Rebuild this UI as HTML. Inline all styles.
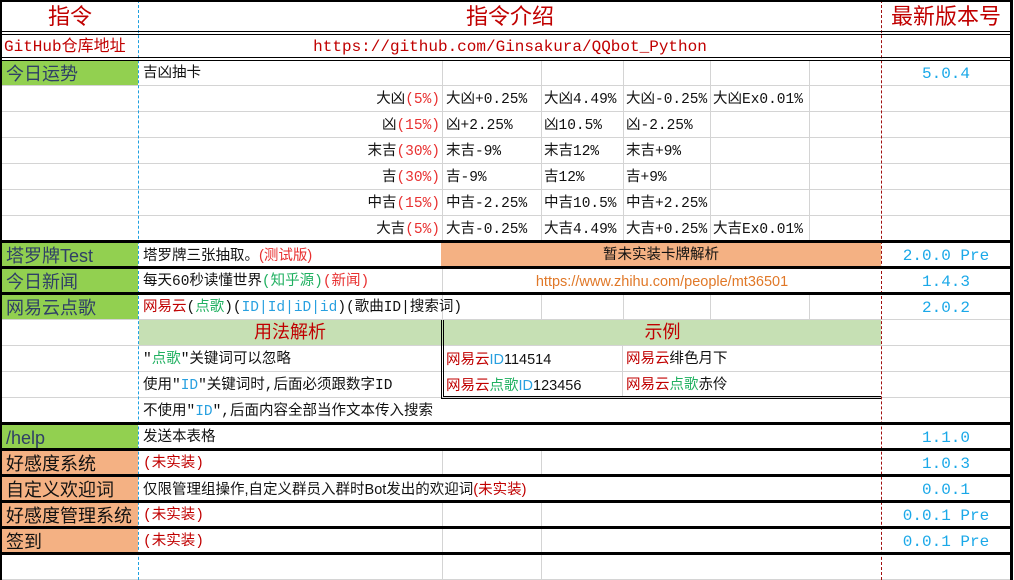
<!DOCTYPE html>
<html><head><meta charset="utf-8"><style>
*{margin:0;padding:0;box-sizing:border-box}
body{width:1014px;height:580px;background:#fff;position:relative;overflow:hidden;font-family:"Liberation Mono","Noto Sans CJK SC",monospace;font-size:14.5px;color:#111}
div{position:absolute}
.h{height:1px;background:#d4d4d4}
.v{width:1px;background:#d4d4d4}
.k{height:3px;background:#000}
.t{white-space:nowrap;line-height:28px;height:26px}
.a{left:6px;font-size:18px;font-family:"Liberation Sans","Noto Sans CJK SC",sans-serif;color:#2f3f66}
.ao{left:6px;font-size:18px;font-family:"Liberation Sans","Noto Sans CJK SC",sans-serif;color:#111}
.ver{left:882px;width:128px;text-align:center;color:#1aa8e8;font-size:16px}
.r{color:#e83030}.g{color:#20b060}.b{color:#28a0e0}.dr{color:#c00000}
.R{right:574px;text-align:right}
</style></head><body>
<!-- fills -->
<div style="left:2px;top:60px;width:136px;height:25px;background:#92d050"></div>
<div style="left:2px;top:242px;width:136px;height:25px;background:#92d050"></div>
<div style="left:2px;top:268px;width:136px;height:25px;background:#92d050"></div>
<div style="left:2px;top:294px;width:136px;height:25px;background:#92d050"></div>
<div style="left:2px;top:424px;width:136px;height:25px;background:#92d050"></div>
<div style="left:2px;top:451px;width:136px;height:25px;background:#f4b183"></div>
<div style="left:2px;top:477px;width:136px;height:25px;background:#f4b183"></div>
<div style="left:2px;top:503px;width:136px;height:25px;background:#f4b183"></div>
<div style="left:2px;top:529px;width:136px;height:25px;background:#f4b183"></div>
<div style="left:441px;top:242px;width:440px;height:25px;background:#f4b183"></div>
<div style="left:139px;top:320px;width:742px;height:25px;background:#c6e0b4"></div>

<div class="h" style="left:2px;top:85px;width:1008px"></div>
<div class="h" style="left:2px;top:111px;width:1008px"></div>
<div class="h" style="left:2px;top:137px;width:1008px"></div>
<div class="h" style="left:2px;top:163px;width:1008px"></div>
<div class="h" style="left:2px;top:189px;width:1008px"></div>
<div class="h" style="left:2px;top:215px;width:1008px"></div>
<div class="h" style="left:2px;top:319px;width:1008px"></div>
<div class="h" style="left:2px;top:345px;width:1008px"></div>
<div class="h" style="left:2px;top:371px;width:1008px"></div>
<div class="h" style="left:2px;top:397px;width:1008px"></div>
<div class="h" style="left:2px;top:579px;width:1008px"></div>

<div class="v" style="left:442px;top:60px;height:181px"></div>
<div class="v" style="left:541px;top:60px;height:181px"></div>
<div class="v" style="left:623px;top:60px;height:181px"></div>
<div class="v" style="left:710px;top:60px;height:181px"></div>
<div class="v" style="left:809px;top:60px;height:181px"></div>
<div class="v" style="left:442px;top:268px;height:25px"></div>
<div class="v" style="left:442px;top:294px;height:25px"></div>
<div class="v" style="left:541px;top:294px;height:25px"></div>
<div class="v" style="left:623px;top:294px;height:25px"></div>
<div class="v" style="left:710px;top:294px;height:25px"></div>
<div class="v" style="left:809px;top:294px;height:25px"></div>
<div class="v" style="left:622px;top:346px;height:51px"></div>
<div class="v" style="left:442px;top:451px;height:24px"></div>
<div class="v" style="left:541px;top:451px;height:24px"></div>
<div class="v" style="left:442px;top:503px;height:24px"></div>
<div class="v" style="left:541px;top:503px;height:24px"></div>
<div class="v" style="left:442px;top:529px;height:24px"></div>
<div class="v" style="left:541px;top:529px;height:24px"></div>
<div class="v" style="left:442px;top:555px;height:25px"></div>
<div class="v" style="left:541px;top:555px;height:25px"></div>

<div style="left:441px;top:320px;width:440px;height:79px;border-left:3px double #000;border-bottom:3px double #000"></div>

<div style="left:138px;top:0;height:580px;border-left:1px dashed #1ea0e0"></div>
<div style="left:881px;top:0;height:580px;border-left:1px dashed #a01010"></div>

<div style="left:0;top:0;width:2px;height:580px;background:#000"></div>
<div style="left:1010px;top:0;width:3px;height:580px;background:#000"></div>
<div style="left:0;top:0;width:1013px;height:2px;background:#000"></div>
<div style="left:0;top:31px;width:1013px;height:4px;border-top:1px solid #000;border-bottom:1px solid #000"></div>
<div style="left:0;top:57px;width:1013px;height:4px;border-top:1px solid #000;border-bottom:1px solid #000"></div>
<div class="k" style="left:0;top:240px;width:1013px"></div>
<div class="k" style="left:0;top:266px;width:1013px"></div>
<div class="k" style="left:0;top:292px;width:1013px"></div>
<div class="k" style="left:0;top:422px;width:1013px"></div>
<div class="k" style="left:0;top:448px;width:1013px"></div>
<div class="k" style="left:0;top:474px;width:1013px"></div>
<div class="k" style="left:0;top:500px;width:1013px"></div>
<div class="k" style="left:0;top:526px;width:1013px"></div>
<div class="k" style="left:0;top:552px;width:1013px"></div>

<div class="t dr" style="left:2px;top:2px;width:136px;text-align:center;font-size:22px;line-height:30px;height:30px;font-family:'Liberation Sans','Noto Sans CJK SC',sans-serif">指令</div>
<div class="t dr" style="left:139px;top:2px;width:742px;text-align:center;font-size:22px;line-height:30px;height:30px;font-family:'Liberation Sans','Noto Sans CJK SC',sans-serif">指令介绍</div>
<div class="t dr" style="left:882px;top:2px;width:128px;text-align:center;font-size:22px;line-height:30px;height:30px;font-family:'Liberation Sans','Noto Sans CJK SC',sans-serif">最新版本号</div>
<div class="t dr" style="left:4px;top:34px;font-size:16px;line-height:26px">GitHub仓库地址</div>
<div class="t dr" style="left:139px;top:34px;width:742px;text-align:center;font-size:16px;line-height:26px">https://github.com/Ginsakura/QQbot_Python</div>

<div class="t a" style="top:60px">今日运势</div>
<div class="t" style="left:143px;top:60px">吉凶抽卡</div>
<div class="t ver" style="top:60px">5.0.4</div>
<div class="t R" style="top:86px">大凶<span class="r">(5%)</span></div>
<div class="t R" style="top:112px">凶<span class="r">(15%)</span></div>
<div class="t R" style="top:138px">末吉<span class="r">(30%)</span></div>
<div class="t R" style="top:164px">吉<span class="r">(30%)</span></div>
<div class="t R" style="top:190px">中吉<span class="r">(15%)</span></div>
<div class="t R" style="top:216px">大吉<span class="r">(5%)</span></div>
<div class="t" style="left:446px;top:86px">大凶+0.25%</div><div class="t" style="left:544px;top:86px">大凶4.49%</div><div class="t" style="left:626px;top:86px">大凶-0.25%</div><div class="t" style="left:713px;top:86px">大凶Ex0.01%</div>
<div class="t" style="left:446px;top:112px">凶+2.25%</div><div class="t" style="left:544px;top:112px">凶10.5%</div><div class="t" style="left:626px;top:112px">凶-2.25%</div>
<div class="t" style="left:446px;top:138px">末吉-9%</div><div class="t" style="left:544px;top:138px">末吉12%</div><div class="t" style="left:626px;top:138px">末吉+9%</div>
<div class="t" style="left:446px;top:164px">吉-9%</div><div class="t" style="left:544px;top:164px">吉12%</div><div class="t" style="left:626px;top:164px">吉+9%</div>
<div class="t" style="left:446px;top:190px">中吉-2.25%</div><div class="t" style="left:544px;top:190px">中吉10.5%</div><div class="t" style="left:626px;top:190px">中吉+2.25%</div>
<div class="t" style="left:446px;top:216px">大吉-0.25%</div><div class="t" style="left:544px;top:216px">大吉4.49%</div><div class="t" style="left:626px;top:216px">大吉+0.25%</div><div class="t" style="left:713px;top:216px">大吉Ex0.01%</div>

<div class="t a" style="top:242px">塔罗牌Test</div>
<div class="t" style="left:143px;top:242px;font-family:'Liberation Sans','Noto Sans CJK SC',sans-serif">塔罗牌三张抽取。<span class="r">(测试版)</span></div>
<div class="t" style="left:441px;top:242px;width:440px;text-align:center">暂未实装卡牌解析</div>
<div class="t ver" style="top:242px">2.0.0 Pre</div>

<div class="t a" style="top:268px">今日新闻</div>
<div class="t" style="left:143px;top:268px">每天60秒读懂世界<span class="g">(知乎源)</span><span class="r">(新闻)</span></div>
<div class="t" style="left:443px;top:268px;width:438px;text-align:center;color:#e07828;font-family:'Liberation Sans',sans-serif">https://www.zhihu.com/people/mt36501</div>
<div class="t ver" style="top:268px">1.4.3</div>

<div class="t a" style="top:294px">网易云点歌</div>
<div class="t" style="left:143px;top:294px"><span class="dr">网易云</span>(<span class="g">点歌</span>)(<span class="b">ID|Id|iD|id</span>)(歌曲ID|搜索词)</div>
<div class="t ver" style="top:294px">2.0.2</div>
<div class="t dr" style="left:139px;top:320px;width:302px;text-align:center;font-size:18px">用法解析</div>
<div class="t dr" style="left:444px;top:320px;width:437px;text-align:center;font-size:18px">示例</div>
<div class="t" style="left:143px;top:346px">"<span class="g">点歌</span>"关键词可以忽略</div>
<div class="t" style="left:143px;top:372px">使用"<span class="b">ID</span>"关键词时,后面必须跟数字ID</div>
<div class="t" style="left:143px;top:398px">不使用"<span class="b">ID</span>",后面内容全部当作文本传入搜索</div>
<div class="t" style="left:446px;top:346px;font-family:'Liberation Sans','Noto Sans CJK SC',sans-serif"><span class="dr">网易云</span><span class="b">ID</span>114514</div>
<div class="t" style="left:446px;top:372px;font-family:'Liberation Sans','Noto Sans CJK SC',sans-serif"><span class="dr">网易云</span><span class="g">点歌</span><span class="b">ID</span>123456</div>
<div class="t" style="left:626px;top:346px"><span class="dr">网易云</span>绯色月下</div>
<div class="t" style="left:626px;top:372px"><span class="dr">网易云</span><span class="g">点歌</span>赤伶</div>

<div class="t a" style="top:424px">/help</div>
<div class="t" style="left:143px;top:424px">发送本表格</div>
<div class="t ver" style="top:424px">1.1.0</div>
<div class="t ao" style="top:450px">好感度系统</div>
<div class="t dr" style="left:143px;top:450px">(未实装)</div>
<div class="t ver" style="top:450px">1.0.3</div>
<div class="t ao" style="top:476px">自定义欢迎词</div>
<div class="t" style="left:143px;top:476px;font-family:'Liberation Sans','Noto Sans CJK SC',sans-serif">仅限管理组操作,自定义群员入群时Bot发出的欢迎词<span class="dr">(未实装)</span></div>
<div class="t ver" style="top:476px">0.0.1</div>
<div class="t ao" style="top:502px">好感度管理系统</div>
<div class="t dr" style="left:143px;top:502px">(未实装)</div>
<div class="t ver" style="top:502px">0.0.1 Pre</div>
<div class="t ao" style="top:528px">签到</div>
<div class="t dr" style="left:143px;top:528px">(未实装)</div>
<div class="t ver" style="top:528px">0.0.1 Pre</div>
</body></html>
